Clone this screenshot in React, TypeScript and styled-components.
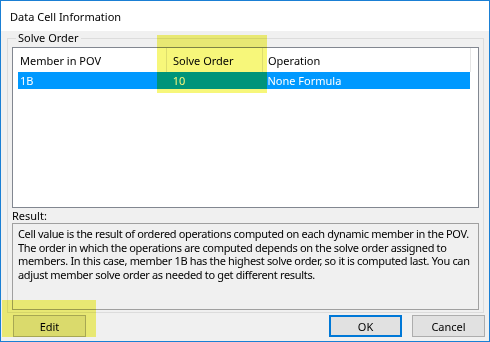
import React from "react";
import styled, { createGlobalStyle } from "styled-components";

const GlobalStyle = createGlobalStyle`
  html, body {
    margin: 0;
    padding: 0;
    background: #ffffff;
  }
  body {
    font-family: "Noto Sans", "Open Sans", sans-serif;
    font-size: 11px;
    color: #000;
  }
  * { box-sizing: border-box; }
`;

const Window = styled.div`
  position: relative;
  width: 490px;
  height: 342px;
  border: 1px solid #1a7fd4;
  background: #f0f0f0;
  display: flex;
  flex-direction: column;
  overflow: hidden;
`;

const TitleBar = styled.div`
  height: 30px;
  background: #ffffff;
  display: flex;
  align-items: center;
  padding: 1px 0 0 9px;
  font-size: 11px;
`;

const GroupBox = styled.fieldset`
  flex: 1;
  margin: 0 5px 0 6px;
  padding: 2px 4px 2px 4px;
  border: 1px solid #dcdcdc;
  display: flex;
  flex-direction: column;
  min-width: 0;
`;

const Legend = styled.legend`
  margin-left: 4px;
  padding: 0 2px;
  line-height: 14px;
  font-size: 11px;
`;

const ListFrame = styled.div`
  height: 161px;
  border: 1px solid #828790;
  background: #ffffff;
  padding-left: 5px;
  display: flex;
  flex-direction: column;
`;

const HeaderRow = styled.div`
  display: flex;
  height: 24px;
`;

const HeaderCell = styled.div<{ $w: number; $pad: number }>`
  width: ${(p) => p.$w}px;
  padding-left: ${(p) => p.$pad}px;
  border-right: 1px solid #e5e5e5;
  display: flex;
  align-items: center;
  white-space: nowrap;
`;

const DataRow = styled.div<{ $selected?: boolean }>`
  display: flex;
  height: 17px;
  width: 452px;
  background: ${(p) => (p.$selected ? "#0099ff" : "transparent")};
  color: ${(p) => (p.$selected ? "#ffffff" : "#000000")};
`;

const DataCell = styled.div<{ $w: number; $pad: number }>`
  width: ${(p) => p.$w}px;
  padding-left: ${(p) => p.$pad}px;
  display: flex;
  align-items: center;
  white-space: nowrap;
`;

const ResultLabel = styled.div`
  height: 15px;
  line-height: 15px;
`;

const ResultBox = styled.div`
  flex: 1;
  border: 1px solid #a0a0a0;
  background: #f0f0f0;
  padding: 3px 0 0 5px;
`;

const ResultLine = styled.div`
  line-height: 13.7px;
  white-space: nowrap;
  letter-spacing: -0.33px;
`;

const ButtonRow = styled.div`
  display: flex;
  align-items: center;
  height: 22px;
  margin: 2px 0 4px 0;
  padding: 0 4px 0 12px;
`;

const Spacer = styled.div`
  flex: 1;
`;

const Button = styled.div<{ $default?: boolean }>`
  width: 73px;
  height: 22px;
  background: #e1e1e1;
  border: 1px solid ${(p) => (p.$default ? "#0078d7" : "#adadad")};
  box-shadow: ${(p) => (p.$default ? "inset 0 0 0 1px #0078d7" : "none")};
  display: flex;
  align-items: center;
  justify-content: center;
  font-size: 11px;
`;

const ButtonGap = styled.div`
  width: 10px;
`;

const Highlight = styled.div`
  position: absolute;
  background: #f7f77a;
  mix-blend-mode: multiply;
  pointer-events: none;
`;

const columns = [
  { label: "Member in POV", w: 149, pad: 2 },
  { label: "Solve Order", w: 96, pad: 6 },
  { label: "Operation", w: 208, pad: 5 },
];

const row = ["1B", "10", "None Formula"];

const resultLines = [
  "Cell value is the result of ordered operations computed on each dynamic member in the POV.",
  "The order in which the operations are computed depends on the solve order assigned to",
  "members. In this case, member 1B has the highest solve order, so it is computed last. You can",
  "adjust member solve order as needed to get different results.",
];

export default function App() {
  return (
    <>
      <GlobalStyle />
      <Window>
        <TitleBar>Data Cell Information</TitleBar>
        <GroupBox>
          <Legend>Solve Order</Legend>
          <ListFrame>
            <HeaderRow>
              {columns.map((c) => (
                <HeaderCell key={c.label} $w={c.w} $pad={c.pad}>
                  {c.label}
                </HeaderCell>
              ))}
            </HeaderRow>
            <DataRow $selected>
              {row.map((v, i) => (
                <DataCell key={i} $w={columns[i].w} $pad={columns[i].pad}>
                  {v}
                </DataCell>
              ))}
            </DataRow>
          </ListFrame>
          <ResultLabel>Result:</ResultLabel>
          <ResultBox>
            {resultLines.map((l, i) => (
              <ResultLine key={i}>{l}</ResultLine>
            ))}
          </ResultBox>
        </GroupBox>
        <ButtonRow>
          <Button>Edit</Button>
          <Spacer />
          <Button $default>OK</Button>
          <ButtonGap />
          <Button>Cancel</Button>
        </ButtonRow>
        <Highlight style={{ left: 156, top: 34, width: 110, height: 58 }} />
        <Highlight style={{ left: 1, top: 299, width: 94, height: 37 }} />
      </Window>
    </>
  );
}
